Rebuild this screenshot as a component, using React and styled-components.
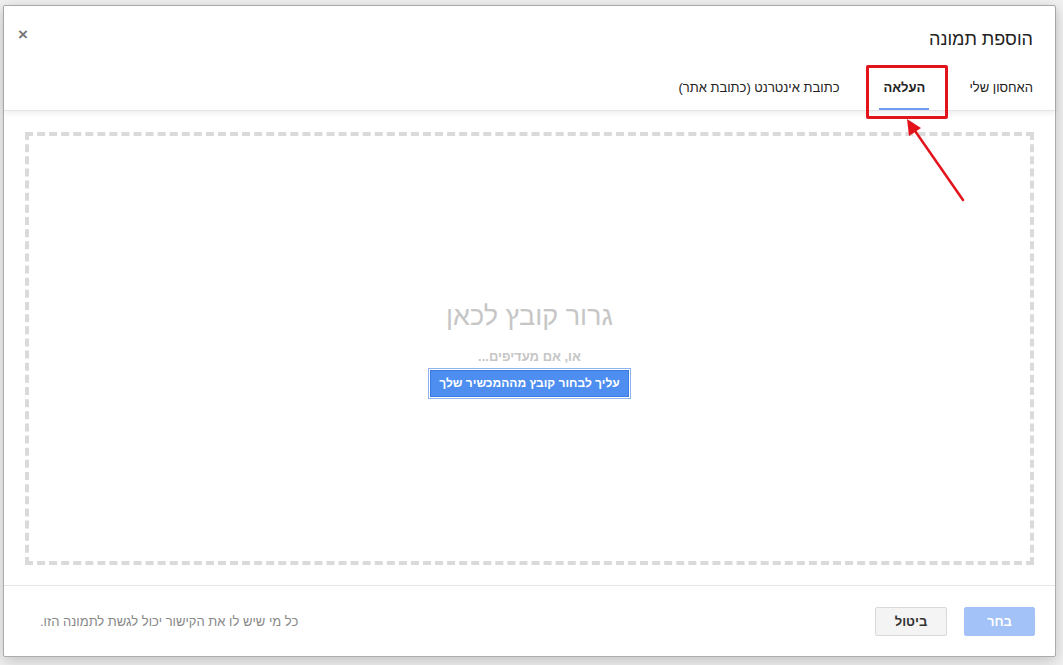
import styled, { createGlobalStyle } from "styled-components";

const Global = createGlobalStyle`
  html, body {
    margin: 0;
    padding: 0;
    background: #f1f1f1;
    font-family: "Liberation Sans", Arial, "DejaVu Sans", sans-serif;
  }
`;

const Page = styled.div`
  width: 1063px;
  height: 665px;
  padding: 5px 0 0 3px;
  box-sizing: border-box;
  position: relative;
  overflow: hidden;
`;

const Dialog = styled.div`
  width: 1053px;
  height: 652px;
  box-sizing: border-box;
  background: #fff;
  border: 1px solid #acacac;
  border-radius: 2px;
  box-shadow: 0 4px 16px rgba(0, 0, 0, 0.2);
  display: flex;
  flex-direction: column;
  direction: rtl;
  position: relative;
`;

const Header = styled.div`
  height: 104px;
  flex-shrink: 0;
  display: flex;
  flex-direction: column;
  position: relative;
  border-bottom: 1px solid #e4e4e4;
  box-shadow: 0 2px 6px rgba(0, 0, 0, 0.08);
  z-index: 1;
`;

const TitleRow = styled.div`
  display: flex;
  align-items: center;
  justify-content: space-between;
  padding: 18px 22px 0 14px;
  height: 30px;
`;

const Title = styled.h1`
  margin: 0;
  font-size: 18px;
  font-weight: normal;
  color: #222;
`;

const Close = styled.span`
  font-size: 17px;
  font-weight: bold;
  color: #777;
  line-height: 1;
  margin-top: -9px;
`;

const Tabs = styled.div`
  display: flex;
  align-items: flex-end;
  padding: 0 18px 0 0;
  margin-top: auto;
`;

const Tab = styled.div`
  font-size: 13px;
  color: #222;
  font-weight: ${(p) => (p.$active ? "bold" : "normal")};
  padding: 0 4px 13px;
  margin-left: ${(p) => (p.$gap ? p.$gap : 0)}px;
  border-bottom: 2px solid ${(p) => (p.$active ? "#6e9bf0" : "transparent")};
  white-space: nowrap;
`;

const Body = styled.div`
  flex: 1;
  padding: 21px 21px 20px 21px;
  display: flex;
`;

const DropZone = styled.div`
  flex: 1;
  border: 4px dashed #dadada;
  display: flex;
  flex-direction: column;
  align-items: center;
  justify-content: center;
  padding-top: 2px;
`;

const DropTitle = styled.div`
  font-size: 27px;
  color: #c6c6c6;
  line-height: 1;
`;

const Or = styled.div`
  margin-top: 19px;
  font-size: 13px;
  font-weight: bold;
  color: #c6c6c6;
`;

const PickButton = styled.button`
  margin-top: 6px;
  font-family: inherit;
  font-size: 12px;
  font-weight: bold;
  color: #fff;
  background: #4d8ef0;
  border: 1px solid #3b7ae0;
  box-shadow: 0 0 0 1px #fff, 0 0 0 2px #8fb3ee;
  padding: 0 8px;
  height: 27px;
  white-space: nowrap;
  direction: rtl;
`;

const Footer = styled.div`
  height: 70px;
  flex-shrink: 0;
  border-top: 1px solid #e5e5e5;
  display: flex;
  align-items: center;
  padding: 0 20px 0 36px;
`;

const Btn = styled.button`
  font-family: inherit;
  font-size: 13px;
  font-weight: bold;
  height: 29px;
  width: ${(p) => p.$w}px;
  margin-left: 17px;
  border-radius: 2px;
  border: 1px solid ${(p) => (p.$primary ? "#a3c2f7" : "#d9d9d9")};
  background: ${(p) => (p.$primary ? "#a3c2f7" : "#f4f4f4")};
  color: ${(p) => (p.$primary ? "#fff" : "#333")};
  margin-top: 1px;
`;

const Note = styled.div`
  margin-right: auto;
  font-size: 13px;
  color: #888;
`;

const Highlight = styled.div`
  position: absolute;
  left: 866px;
  top: 65px;
  width: 76px;
  height: 48px;
  border: 3px solid #e3131b;
  border-radius: 2px;
  z-index: 5;
`;

const Arrow = styled.svg`
  position: absolute;
  left: 895px;
  top: 112px;
  z-index: 5;
`;

export default function App() {
  return (
    <Page>
      <Global />
      <Dialog>
        <Header>
          <TitleRow>
            <Title>הוספת תמונה</Title>
            <Close>×</Close>
          </TitleRow>
          <Tabs>
            <Tab $gap={36}>האחסון שלי</Tab>
            <Tab $active $gap={36}>
              העלאה
            </Tab>
            <Tab>כתובת אינטרנט (כתובת אתר)</Tab>
          </Tabs>
        </Header>
        <Body>
          <DropZone>
            <DropTitle>גרור קובץ לכאן</DropTitle>
            <Or>או, אם מעדיפים...</Or>
            <PickButton>עליך לבחור קובץ מההמכשיר שלך</PickButton>
          </DropZone>
        </Body>
        <Footer>
          <Btn $primary $w={71}>
            בחר
          </Btn>
          <Btn $w={72}>ביטול</Btn>
          <Note>כל מי שיש לו את הקישור יכול לגשת לתמונה הזו.</Note>
        </Footer>
      </Dialog>
      <Highlight />
      <Arrow width="80" height="95" viewBox="0 0 80 95">
        <line x1="68" y1="88" x2="18" y2="16" stroke="#e3131b" strokeWidth="2.5" strokeLinecap="round" />
        <polygon points="12,7 26,16 14,24" fill="#e3131b" />
      </Arrow>
    </Page>
  );
}
